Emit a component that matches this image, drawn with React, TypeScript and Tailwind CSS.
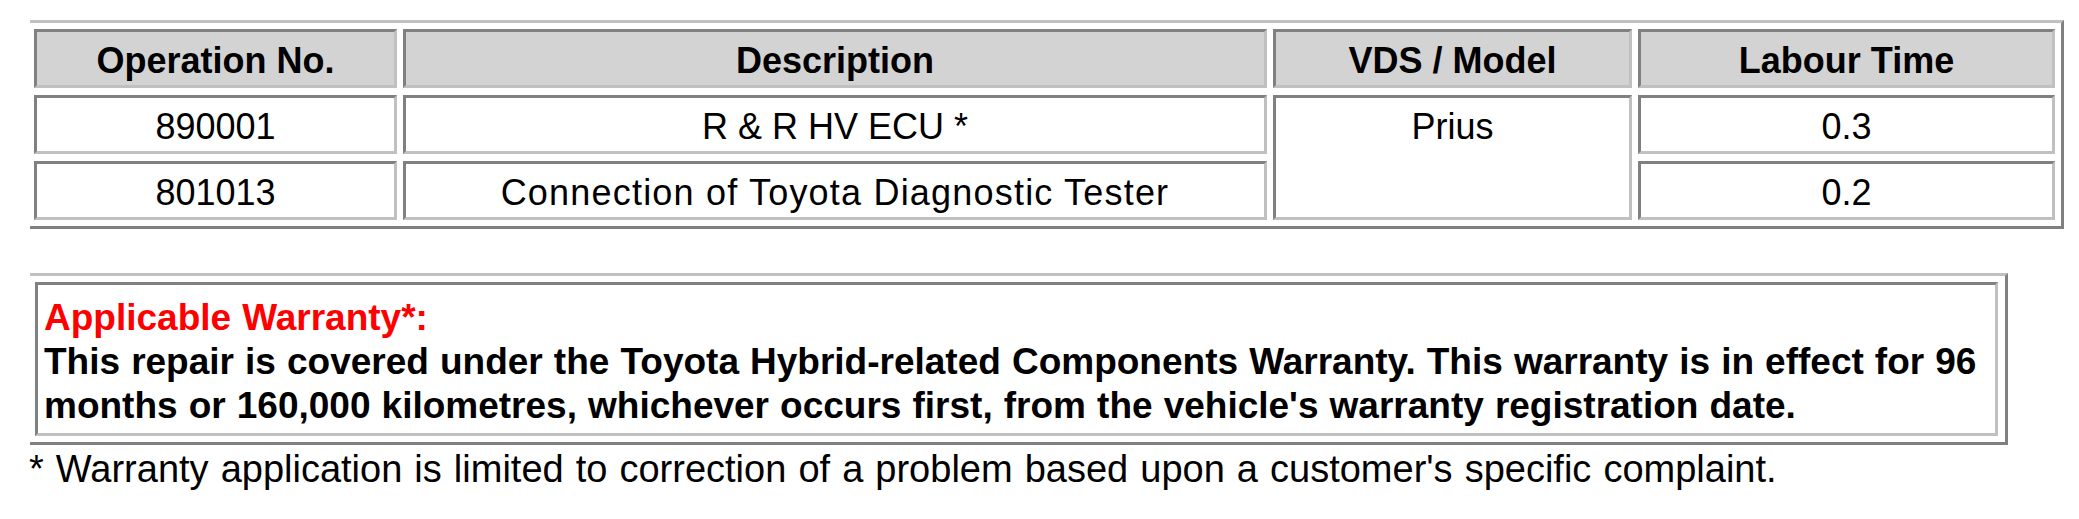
import React from 'react';

const cell =
  'border-[3px] border-t-[#808080] border-l-[#808080] border-b-[#c0c0c0] border-r-[#c0c0c0] flex items-center justify-center';

const rows = [
  { op: '890001', desc: 'R & R HV ECU *', time: '0.3', track: '' },
  { op: '801013', desc: 'Connection of Toyota Diagnostic Tester', time: '0.2', track: 'tracking-[1.2px]' },
];

export default function App() {
  return (
    <div className="w-[2079px] h-[519px] bg-white text-black font-['Liberation_Sans',Arial,sans-serif] overflow-hidden">
      <div className="ml-[30px] mt-[20px] w-fit border-t-[3px] border-t-[#c0c0c0] border-r-[3px] border-r-[#808080] border-b-[3px] border-b-[#808080] pt-[6px] pl-[4px] pr-[6px] pb-[6px]">
        <div className="grid grid-cols-[363px_864px_359px_417px] grid-rows-[59px_59px_59px] gap-x-[6px] gap-y-[7px]">
          {['Operation No.', 'Description', 'VDS / Model', 'Labour Time'].map((h) => (
            <div key={h} className={`${cell} bg-[#d3d3d3] text-[36px] font-bold leading-none pt-[5px]`}>
              {h}
            </div>
          ))}
          <div className={`${cell} text-[36px] leading-none pt-[4px]`}>{rows[0].op}</div>
          <div className={`${cell} text-[36px] leading-none pt-[4px]`}>{rows[0].desc}</div>
          <div className="row-span-2 border-[3px] border-t-[#808080] border-l-[#808080] border-b-[#c0c0c0] border-r-[#c0c0c0]">
            <div className="h-[53px] flex items-center justify-center text-[36px] leading-none pt-[4px]">Prius</div>
          </div>
          <div className={`${cell} text-[36px] leading-none pt-[4px]`}>{rows[0].time}</div>
          <div className={`${cell} text-[36px] leading-none pt-[4px]`}>{rows[1].op}</div>
          <div className={`${cell} text-[36px] leading-none pt-[4px] ${rows[1].track}`}>{rows[1].desc}</div>
          <div className={`${cell} text-[36px] leading-none pt-[4px]`}>{rows[1].time}</div>
        </div>
      </div>

      <div className="ml-[30px] mt-[44px] w-[1978px] border-t-[3px] border-t-[#c0c0c0] border-r-[3px] border-r-[#808080] border-b-[3px] border-b-[#808080] pt-[6px] pl-[5px] pr-[7px] pb-[6px]">
        <div className="h-[154px] border-[3px] border-t-[#808080] border-l-[#808080] border-b-[#c0c0c0] border-r-[#c0c0c0] pl-[6px] pt-[11px] font-bold text-[37px] leading-[44px] [word-spacing:0.8px]">
          <div className="text-[#ff0000]">Applicable Warranty*:</div>
          <div>
            This repair is covered under the Toyota Hybrid-related Components Warranty. This warranty is in effect for 96
            <br />
            months or 160,000 kilometres, whichever occurs first, from the vehicle's warranty registration date.
          </div>
        </div>
      </div>

      <div className="ml-[29px] text-[38px] leading-[48px] [word-spacing:1.5px]">
        * Warranty application is limited to correction of a problem based upon a customer's specific complaint.
      </div>
    </div>
  );
}
